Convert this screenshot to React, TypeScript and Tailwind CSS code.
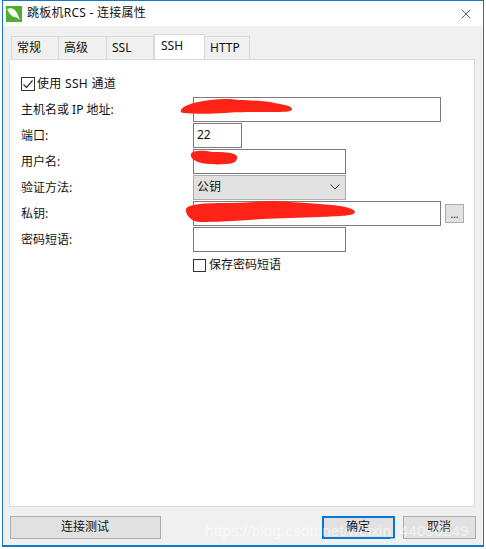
import React from 'react';
import { X } from 'lucide-react';

const FONT = '"Noto Sans", "Noto Sans CJK SC", sans-serif';

const Tab = ({ label, width, active }: { label: string; width: string; active?: boolean }) => (
  <div
    className={
      active
        ? `${width} h-[25px] -mb-px z-10 bg-white border border-b-0 border-[#d9d9d9] -mt-[2px] pt-[2px] pl-[6px]`
        : `${width} h-[23px] bg-[#f0f0f0] border border-l-0 border-b-0 border-[#d9d9d9] pt-[2px] pl-[5px]`
    }
  >
    {label}
  </div>
);

const Field = ({ label, width = 'w-[248px]', children }: { label?: string; width?: string; children?: React.ReactNode }) => (
  <div className="flex items-center h-[26px]">
    <div className="w-[172px] mt-[1px]">{label}</div>
    <div className={`${width} h-[25px] border border-[#7a7a7a] bg-white pl-[3px] flex items-center`}>{children}</div>
  </div>
);

export default function App() {
  return (
    <div className="w-[486px] h-[549px] bg-white text-[12px] text-[#111] relative overflow-hidden" style={{ fontFamily: FONT }}>
      <div className="ml-[2px] w-[482px] h-[547px] border border-[#1379c4] border-b-2 bg-[#f0f0f0] flex flex-col">
        {/* title bar */}
        <div className="h-[25px] bg-white flex items-center shrink-0">
          <svg width="16" height="16" viewBox="0 0 16 16" className="ml-[3px]">
            <rect width="16" height="16" fill="#4fae2e" />
            <path d="M1 3 C5 1 9 3 11 7 C12 9 13 11 14 14 C12 12 10 11 8 11 C5 10 3 7 1 3Z" fill="#ffffff" />
          </svg>
          <span className="ml-[5px] text-[12px] mt-[-1px] tracking-[0.25px]">跳板机RCS - 连接属性</span>
          <X className="ml-auto mr-[9px] mt-[1px]" size={16} strokeWidth={1} color="#111" />
        </div>

        {/* tabs */}
        <div className="flex ml-[8px] mt-[10px] h-[23px] shrink-0 relative">
          <div className="border-l border-[#d9d9d9] flex">
            <Tab label="常规" width="w-[47px]" />
            <Tab label="高级" width="w-[48px]" />
            <Tab label="SSL" width="w-[47px]" />
          </div>
          <Tab label="SSH" width="w-[51px]" active />
          <Tab label="HTTP" width="w-[45px]" />
        </div>

        {/* panel */}
        <div className="ml-[6px] w-[466px] h-[448px] shrink-0 bg-white border border-[#d9d9d9] pl-[11px] pt-[16px]">
          <div className="flex items-center h-[16px]">
            <div className="w-[14px] h-[14px] border border-[#333] flex items-center justify-center">
              <svg width="12" height="12" viewBox="0 0 12 12">
                <path d="M1.5 6.5 L4.5 9.5 L10.5 2.5" fill="none" stroke="#333" strokeWidth="1.2" />
              </svg>
            </div>
            <span className="ml-[2px] -mt-[1px] tracking-[0.3px]">使用 SSH 通道</span>
          </div>
          <div className="mt-[4px] flex flex-col">
            <Field label="主机名或 IP 地址:" />
            <Field label="端口:" width="w-[49px]">22</Field>
            <Field label="用户名:" width="w-[153px]" />
            <div className="flex items-center h-[26px]">
              <div className="w-[172px] mt-[1px]">验证方法:</div>
              <div className="w-[153px] h-[25px] border border-[#adadad] bg-[#e1e1e1] pl-[3px] flex items-center justify-between">
                公钥
                <svg width="10" height="6" viewBox="0 0 10 6" className="mr-[5px]">
                  <path d="M0.5 0.5 L5 5 L9.5 0.5" fill="none" stroke="#333" strokeWidth="1" />
                </svg>
              </div>
            </div>
            <div className="flex items-center h-[26px]">
              <div className="w-[172px] mt-[1px]">私钥:</div>
              <div className="w-[248px] h-[25px] border border-[#7a7a7a] bg-white" />
              <div className="ml-[4px] w-[19px] h-[19px] border border-[#adadad] bg-[#e1e1e1] text-[10px] leading-[18px] text-center">...</div>
            </div>
            <Field label="密码短语:" width="w-[153px]" />
          </div>
          <div className="flex items-center mt-[4px] ml-[172px]">
            <div className="w-[13px] h-[13px] border border-[#333] bg-white" />
            <span className="ml-[3px]">保存密码短语</span>
          </div>
        </div>

        {/* bottom buttons */}
        <div className="flex mt-[9px] ml-[7px] pr-[7px] h-[23px] shrink-0">
          <div className="w-[151px] h-[23px] border border-[#adadad] bg-[#e1e1e1] text-center leading-[20px] pr-[1px]">连接测试</div>
          <div className="ml-auto w-[73px] h-[23px] border-2 border-[#0078d7] bg-[#e1e1e1] text-center leading-[18px] pr-[1px]">确定</div>
          <div className="ml-[8px] w-[73px] h-[23px] border border-[#adadad] bg-[#e1e1e1] text-center leading-[20px] pr-[1px]">取消</div>
        </div>
      </div>

      {/* red marker scribbles over the fields */}
      <svg className="absolute left-0 top-0 pointer-events-none" width="486" height="549">
        <g fill="#ff2216">
          <path d="M181 110 C183 106 192 103 198 102 C212 99 228 98 238 100 C250 100 262 101 270 102 C278 104 292 105 292 109 C292 112 285 112 270 112 C250 112 235 112 225 113 C210 114 195 114 184 113 C181 113 180 112 181 110Z" />
          <path d="M191 154 C192 150 204 150 212 152 C222 152 234 152 237 156 C238 161 234 164 226 164 C216 165 204 164 198 162 C193 160 190 157 191 154Z" />
          <path d="M186 209 C188 204 205 203 225 203 C240 203 255 202 270 201 C285 201 300 203 320 204 C335 205 354 207 355 212 C355 216 340 216 320 217 C300 218 280 218 262 219 C240 221 215 222 200 222 C192 222 185 215 186 209Z" />
        </g>
      </svg>

      {/* blog watermark */}
      <div className="absolute left-[205px] top-[519px] text-[15.5px] whitespace-nowrap text-white/55" style={{ fontFamily: '"Liberation Sans", sans-serif' }}>
        https://blog.csdn.net/weixin_44096249
      </div>
    </div>
  );
}
